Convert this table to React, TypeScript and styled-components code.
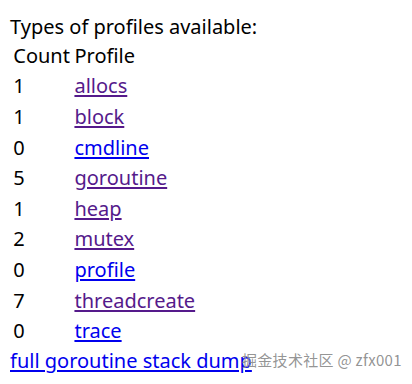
import React from 'react'
import styled, { createGlobalStyle } from 'styled-components'

const GlobalStyle = createGlobalStyle`
  html, body {
    margin: 0;
    background: #ffffff;
  }
  body {
    padding: 10px;
    font-family: "Noto Sans", "Open Sans", sans-serif;
    font-size: 20px;
    line-height: 26.1px;
    color: #000000;
  }
`

const Page = styled.div`
  position: relative;
  height: 364px;
  padding-top: 3.5px;
  box-sizing: border-box;
`

const Title = styled.div``

const ProfileTable = styled.table`
  border-spacing: 2.5px;
  border-collapse: separate;
  font-size: 20px;
  margin-left: 0;
`

const Cell = styled.td`
  padding: 1.25px;
  vertical-align: top;
  text-align: left;
`

const HeadCell = styled.th`
  padding: 1.25px;
  font-weight: normal;
  text-align: left;
`

const Link = styled.a<{ $visited?: boolean }>`
  color: ${p => (p.$visited ? '#551a8b' : '#0000ee')};
  text-decoration: underline;
  text-underline-offset: 2px;
`

const Watermark = styled.div`
  position: absolute;
  left: 232px;
  top: 337px;
  font-family: "Noto Sans CJK SC", "Noto Sans", sans-serif;
  font-size: 15px;
  color: rgba(120, 120, 120, 0.8);
  white-space: nowrap;
  letter-spacing: 0.3px;
  text-shadow: 0 0 1px rgba(255, 255, 255, 0.6);
`

const profiles = [
  { count: 1, name: 'allocs', visited: true },
  { count: 1, name: 'block', visited: true },
  { count: 0, name: 'cmdline', visited: false },
  { count: 5, name: 'goroutine', visited: true },
  { count: 1, name: 'heap', visited: true },
  { count: 2, name: 'mutex', visited: true },
  { count: 0, name: 'profile', visited: false },
  { count: 7, name: 'threadcreate', visited: true },
  { count: 0, name: 'trace', visited: false },
]

export default function App() {
  return (
    <Page>
      <GlobalStyle />
      <Title>Types of profiles available:</Title>
      <ProfileTable>
        <thead>
          <tr>
            <HeadCell>Count</HeadCell>
            <HeadCell>Profile</HeadCell>
          </tr>
        </thead>
        <tbody>
          {profiles.map(p => (
            <tr key={p.name}>
              <Cell>{p.count}</Cell>
              <Cell>
                <Link href={`${p.name}?debug=1`} $visited={p.visited}>{p.name}</Link>
              </Cell>
            </tr>
          ))}
        </tbody>
      </ProfileTable>
      <Link href="goroutine?debug=2">full goroutine stack dump</Link>
      <Watermark>掘金技术社区 @ zfx001</Watermark>
    </Page>
  )
}
